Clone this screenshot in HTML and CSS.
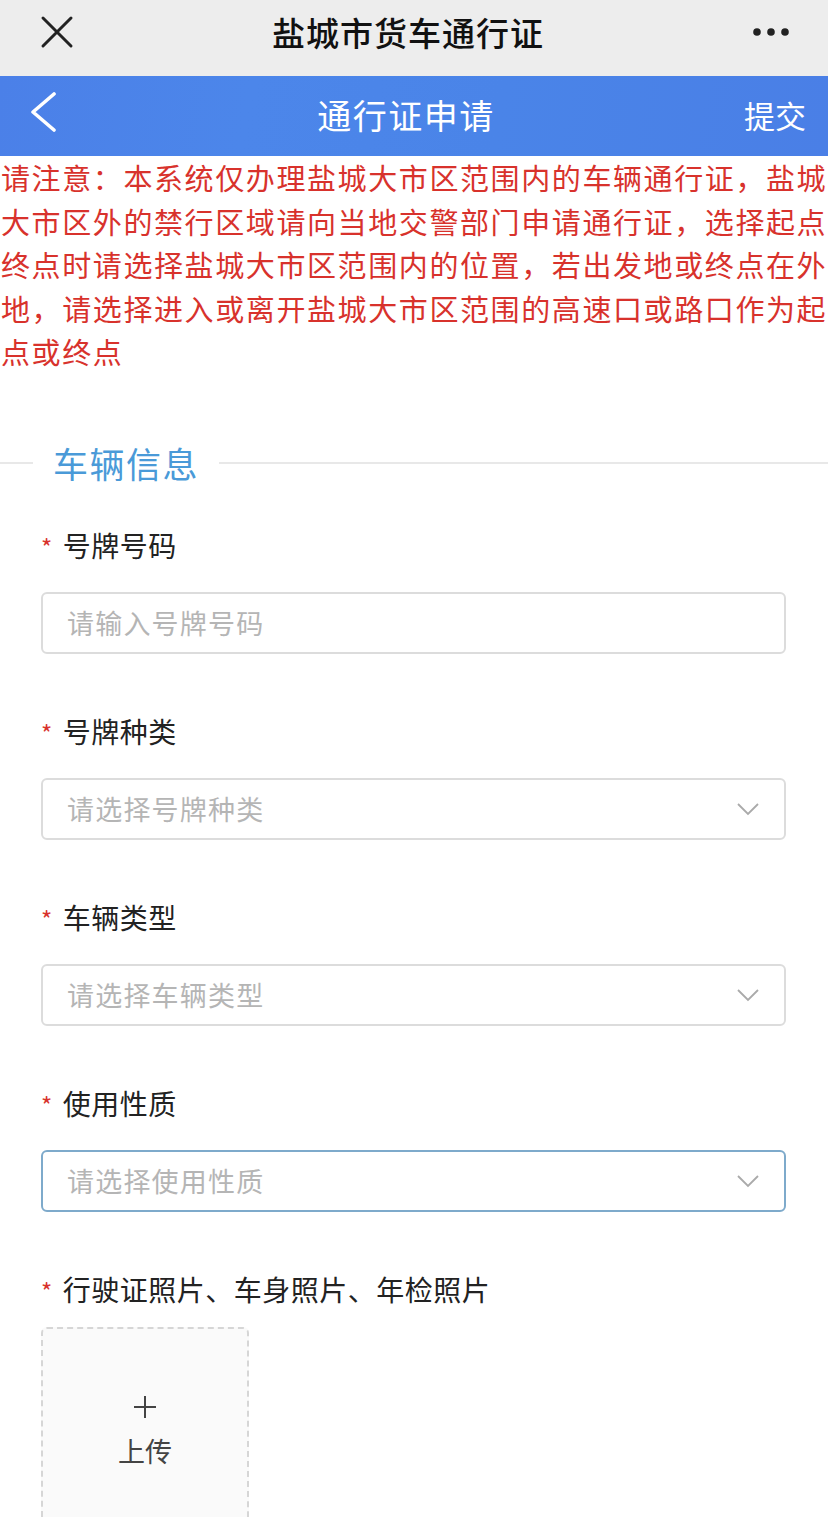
FILE: index.html
```html
<!DOCTYPE html>
<html lang="zh-CN">
<head>
<meta charset="utf-8">
<title>盐城市货车通行证</title>
<link rel="stylesheet" href="styles.css">
</head>
<body>
<div class="topbar">
  <svg class="close" width="34" height="34" viewBox="0 0 34 34"><path d="M3 3 L31 31 M31 3 L3 31" stroke="#222" stroke-width="3" fill="none" stroke-linecap="round"/></svg>
  <div class="topbar-title">盐城市货车通行证</div>
  <svg class="more" width="40" height="10" viewBox="0 0 40 10"><circle cx="5" cy="5" r="3.8" fill="#222"/><circle cx="19" cy="5" r="3.8" fill="#222"/><circle cx="33" cy="5" r="3.8" fill="#222"/></svg>
</div>
<div class="header">
  <svg class="back" width="30" height="40" viewBox="0 0 30 40"><path d="M26 2 L5 20 L26 38" stroke="#fff" stroke-width="3.6" fill="none" stroke-linecap="round" stroke-linejoin="round"/></svg>
  <div class="header-title">通行证申请</div>
  <div class="header-action">提交</div>
</div>
<div class="notice">请注意：本系统仅办理盐城大市区范围内的车辆通行证，盐城大市区外的禁行区域请向当地交警部门申请通行证，选择起点终点时请选择盐城大市区范围内的位置，若出发地或终点在外地，请选择进入或离开盐城大市区范围的高速口或路口作为起点或终点</div>

<div class="section">
  <span class="section-line short"></span>
  <span class="section-title">车辆信息</span>
  <span class="section-line long"></span>
</div>

<div class="field">
  <div class="label"><span class="req">*</span>号牌号码</div>
  <div class="box"><span class="ph">请输入号牌号码</span></div>
</div>
<div class="field">
  <div class="label"><span class="req">*</span>号牌种类</div>
  <div class="box"><span class="ph">请选择号牌种类</span><svg class="arrow" width="24" height="14" viewBox="0 0 24 14"><path d="M2 2 L12 12 L22 2" stroke="#aaa" stroke-width="1.8" fill="none"/></svg></div>
</div>
<div class="field">
  <div class="label"><span class="req">*</span>车辆类型</div>
  <div class="box"><span class="ph">请选择车辆类型</span><svg class="arrow" width="24" height="14" viewBox="0 0 24 14"><path d="M2 2 L12 12 L22 2" stroke="#aaa" stroke-width="1.8" fill="none"/></svg></div>
</div>
<div class="field">
  <div class="label"><span class="req">*</span>使用性质</div>
  <div class="box focus"><span class="ph">请选择使用性质</span><svg class="arrow" width="24" height="14" viewBox="0 0 24 14"><path d="M2 2 L12 12 L22 2" stroke="#aaa" stroke-width="1.8" fill="none"/></svg></div>
</div>
<div class="field upload-field">
  <div class="label"><span class="req">*</span>行驶证照片、车身照片、年检照片</div>
  <div class="upload">
    <svg class="plus" width="24" height="24" viewBox="0 0 24 24"><path d="M12 1 V23 M1 12 H23" stroke="#444" stroke-width="2" fill="none"/></svg>
    <span class="upload-text">上传</span>
  </div>
</div>
</body>
</html>
```
FILE: styles.css
```css
* { box-sizing: border-box; }
html, body { margin: 0; padding: 0; background: #fff; }
body {
  width: 828px;
  font-family: "Noto Sans CJK SC", "Noto Sans", sans-serif;
  overflow: hidden;
}
.topbar {
  height: 76px;
  padding-bottom: 12px;
  background: #ededed;
  display: flex;
  align-items: center;
}
.close { margin-left: 40px; }
.topbar-title {
  flex: 1;
  text-align: center;
  font-size: 33px;
  font-weight: 500;
  color: #111;
  letter-spacing: 1px;
  margin-left: -10px;
}
.more { margin-right: 36px; }
.header {
  height: 80px;
  background: linear-gradient(100deg, #4b80e8 0%, #4c86ea 30%, #4a84e8 60%, #4a7fe6 100%);
  display: flex;
  align-items: center;
  color: #fff;
}
.back { margin-left: 28px; margin-top: -8px; }
.header-title {
  flex: 1;
  text-align: center;
  font-size: 34px;
  letter-spacing: 1.5px;
  margin-left: 10px;
  margin-top: -4px;
}
.header-action {
  font-size: 31px;
  margin-right: 22px;
  margin-top: -4px;
}
.notice {
  color: #d8322c;
  font-size: 29px;
  line-height: 43.5px;
  letter-spacing: 1.6px;
  padding: 0 0 0 1px;
}
.section {
  margin-top: 64px;
  height: 50px;
  display: flex;
  align-items: center;
}
.section-line { height: 2px; background: #e8e8e8; }
.section-line.short { width: 33px; }
.section-line.long { flex: 1; }
.section-title {
  color: #4a9ad8;
  font-size: 35px;
  padding: 0 20px;
  letter-spacing: 1.5px;
}
.field {
  padding: 0 42px 0 41px;
}
.section + .field { margin-top: 37px; }
.label {
  height: 40px;
  display: flex;
  align-items: center;
  font-size: 28px;
  color: #222;
  letter-spacing: 0.5px;
}
.req {
  color: #d8322c;
  font-size: 24px;
  margin-right: 10px;
  margin-top: 4px;
}
.box {
  margin-top: 27px;
  height: 62px;
  border: 2px solid #dcdcdc;
  border-radius: 6px;
  display: flex;
  align-items: center;
  padding: 0 24px;
  margin-bottom: 57px;
}
.box.focus { border-color: #7eaacb; }
.ph {
  flex: 1;
  color: #b5b5b5;
  font-size: 27px;
  letter-spacing: 1.2px;
}
.upload {
  margin-top: 18px;
  width: 208px;
  height: 208px;
  border: 2px dashed #d6d6d6;
  border-radius: 6px;
  background: #fafafa;
  display: flex;
  flex-direction: column;
  align-items: center;
  justify-content: center;
  color: #444;
}
.plus { margin-bottom: 14px; margin-top: 2px; }
.upload-text {
  font-size: 27px;
  line-height: 36px;
}
```
